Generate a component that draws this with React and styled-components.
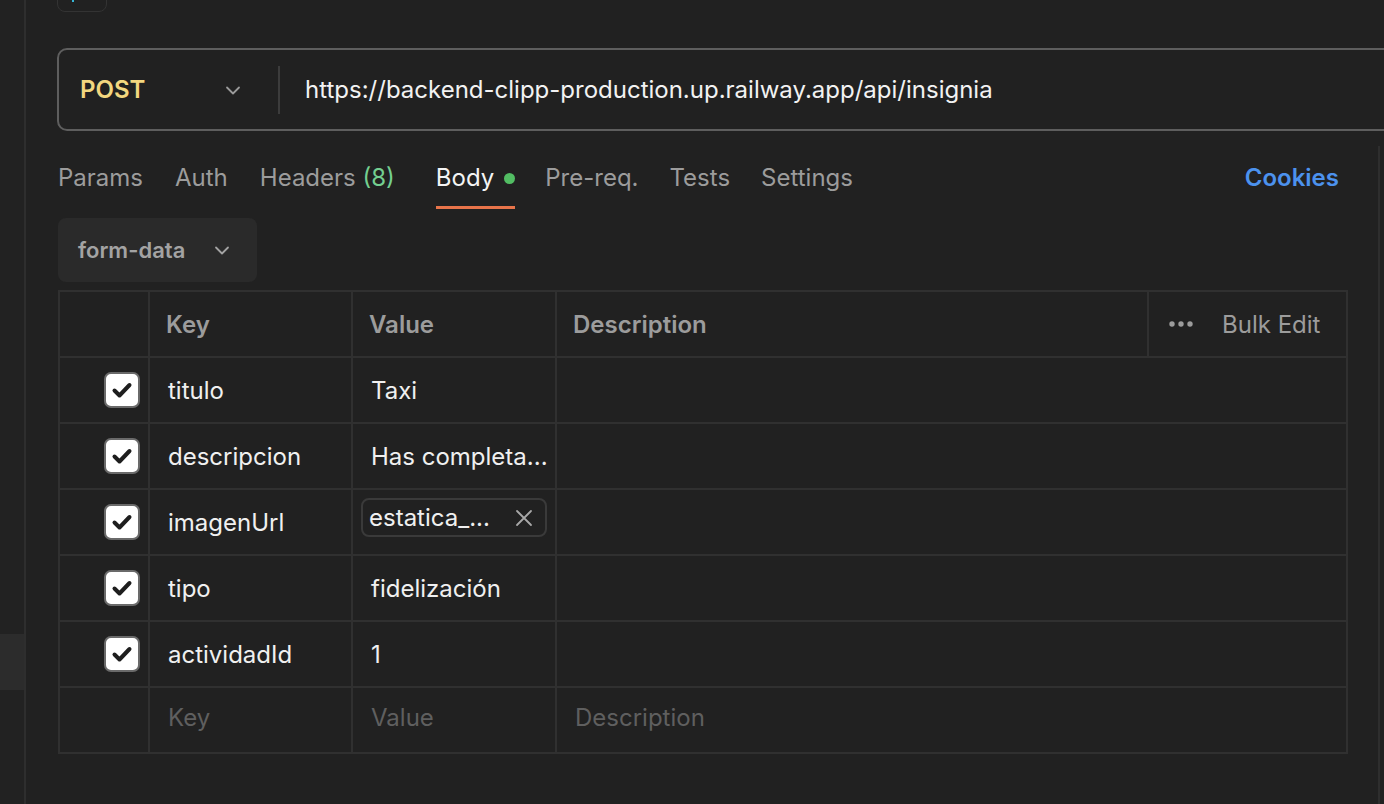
import React from 'react';
import styled, { createGlobalStyle } from 'styled-components';

const GlobalStyle = createGlobalStyle`
  html, body {
    margin: 0;
    padding: 0;
    background: #212121;
    font-family: Inter, "Noto Sans", "Liberation Sans", sans-serif;
    overflow: hidden;
  }
`;

const Page = styled.div`
  display: flex;
  width: 1384px;
  height: 804px;
  background: #212121;
  overflow: hidden;
`;

const Sidebar = styled.div`
  width: 24px;
  flex-shrink: 0;
  background: #222222;
  border-right: 2px solid #2e2e2e;
  display: flex;
  flex-direction: column;
  padding-top: 634px;
`;

const SideActive = styled.div`
  height: 56px;
  background: #2c2c2c;
`;

const Main = styled.div`
  flex: 1;
  display: flex;
  flex-direction: column;
  min-width: 0;
`;

const TopStrip = styled.div`
  height: 12px;
  padding-left: 31px;
  display: flex;
  align-items: flex-end;
  overflow: hidden;
`;

const TopButton = styled.div`
  width: 50px;
  height: 40px;
  flex-shrink: 0;
  border: 1px solid #333333;
  border-radius: 8px;
  box-sizing: border-box;
  position: relative;
  &::after {
    content: '';
    position: absolute;
    left: 14px;
    top: 26px;
    width: 2px;
    height: 3px;
    background: #36b6d6;
  }
`;

const UrlRow = styled.div`
  padding: 36px 0 0 31px;
`;

const UrlBar = styled.div`
  width: 1400px;
  height: 83px;
  box-sizing: border-box;
  border: 2px solid #5e5e5e;
  border-radius: 10px;
  display: flex;
  align-items: center;
`;

const Method = styled.div`
  width: 219px;
  padding: 0 36px 0 21px;
  box-sizing: border-box;
  display: flex;
  align-items: center;
  justify-content: space-between;
  color: #f3d77f;
  font-weight: 600;
  font-size: 24px;
`;

const Divider = styled.div`
  width: 2px;
  height: 48px;
  background: #3c3c3c;
`;

const UrlText = styled.div`
  color: #f2f2f2;
  font-size: 24px;
  padding-left: 25px;
`;

const Lower = styled.div`
  flex: 1;
  margin-top: 15px;
  margin-right: 4px;
  border-right: 2px solid #2e2e2e;
  padding: 0 0 0 32px;
  display: flex;
  flex-direction: column;
`;

const Tabs = styled.div`
  display: flex;
  align-items: flex-start;
  height: 72px;
  padding-right: 39px;
`;

const Tab = styled.div`
  color: ${p => (p.active ? '#f4f4f4' : '#9c9c9c')};
  font-size: 24px;
  height: 63px;
  padding-top: 17px;
  box-sizing: border-box;
  margin-right: ${p => p.gap || 32}px;
  display: flex;
  align-items: flex-start;
  gap: 10px;
  border-bottom: 3px solid ${p => (p.active ? '#e8744a' : 'transparent')};
`;

const Count = styled.span`
  color: #74cf90;
`;

const Dot = styled.span`
  width: 11px;
  height: 11px;
  border-radius: 50%;
  background: #52bd63;
  margin-top: 10px;
`;

const Cookies = styled.div`
  margin-left: auto;
  color: #4c92ee;
  font-weight: 600;
  font-size: 24px;
  padding-top: 17px;
`;

const ModeSelect = styled.div`
  width: 199px;
  height: 64px;
  border-radius: 8px;
  background: #2a2a2a;
  box-sizing: border-box;
  padding: 0 26px 0 20px;
  display: flex;
  align-items: center;
  justify-content: space-between;
  color: #a3a3a3;
  font-size: 22px;
  font-weight: 600;
`;

const Table = styled.div`
  margin-top: 8px;
  width: 1290px;
  display: grid;
  grid-template-columns: 88px 201px 202px 590px 197px;
  grid-auto-rows: 64px;
  gap: 2px;
  padding: 2px;
  box-sizing: border-box;
  background: #303030;
`;

const Cell = styled.div`
  background: #212121;
  display: flex;
  align-items: center;
  padding-left: ${p => p.pad ?? 16}px;
  padding-bottom: ${p => p.lift || 0}px;
  grid-column: span ${p => p.span || 1};
  font-size: 24px;
  color: ${p => (p.placeholder ? '#5f5f5f' : '#f0f0f0')};
  min-width: 0;
  white-space: nowrap;
`;

const HeadCell = styled(Cell)`
  color: #9c9c9c;
  font-weight: 600;
`;

const CheckCell = styled(Cell)`
  justify-content: flex-end;
  padding: 0 8px 0 0;
`;

const BulkCell = styled(Cell)`
  color: #9c9c9c;
  font-weight: 400;
  padding-left: 19px;
  gap: 28px;
`;

const Box = styled.div`
  width: 36px;
  height: 36px;
  box-sizing: border-box;
  background: #ffffff;
  border: 2px solid #6a6a6a;
  border-radius: 7px;
  display: flex;
  align-items: center;
  justify-content: center;
`;

const Chip = styled.div`
  width: 186px;
  height: 39px;
  margin: 0 0 9px -10px;
  box-sizing: border-box;
  border: 2px solid #3a3a3a;
  border-radius: 8px;
  display: flex;
  align-items: center;
  justify-content: space-between;
  padding: 0 12px 0 6px;
  color: #f0f0f0;
  font-size: 24px;
`;

const Chevron = ({ color = '#9a9a9a', size = 18 }) => (
  <svg width={size} height={size} viewBox="0 0 18 18" fill="none">
    <path d="M3 6.5L9 12.5L15 6.5" stroke={color} strokeWidth="1.8" strokeLinecap="round" strokeLinejoin="round" />
  </svg>
);

const Check = () => (
  <svg width="24" height="24" viewBox="0 0 24 24" fill="none">
    <path d="M4.5 12.5L9.5 17.5L19.5 7" stroke="#1e1e1e" strokeWidth="4" strokeLinecap="round" strokeLinejoin="round" />
  </svg>
);

const Dots = () => (
  <svg width="26" height="8" viewBox="0 0 26 8" fill="none">
    <circle cx="4" cy="4" r="2.7" fill="#9c9c9c" />
    <circle cx="13" cy="4" r="2.7" fill="#9c9c9c" />
    <circle cx="22" cy="4" r="2.7" fill="#9c9c9c" />
  </svg>
);

const Close = () => (
  <svg width="18" height="18" viewBox="0 0 18 18" fill="none">
    <path d="M2 2L16 16M16 2L2 16" stroke="#a8a8a8" strokeWidth="1.8" strokeLinecap="round" />
  </svg>
);

const rows = [
  { key: 'titulo', value: 'Taxi' },
  { key: 'descripcion', value: 'Has completa...' },
  { key: 'imagenUrl', file: 'estatica_...' },
  { key: 'tipo', value: 'fidelización' },
  { key: 'actividadId', value: '1' },
];

export default function App() {
  return (
    <Page>
      <GlobalStyle />
      <Sidebar>
        <SideActive />
      </Sidebar>
      <Main>
        <TopStrip>
          <TopButton />
        </TopStrip>
        <UrlRow>
          <UrlBar>
            <Method>
              POST
              <Chevron />
            </Method>
            <Divider />
            <UrlText>https://backend-clipp-production.up.railway.app/api/insignia</UrlText>
          </UrlBar>
        </UrlRow>
        <Lower>
          <Tabs>
            <Tab>Params</Tab>
            <Tab>Auth</Tab>
            <Tab gap={41}>
              <span>
                Headers <Count>(8)</Count>
              </span>
            </Tab>
            <Tab active gap={30}>
              Body
              <Dot />
            </Tab>
            <Tab gap={31}>Pre-req.</Tab>
            <Tab gap={31}>Tests</Tab>
            <Tab>Settings</Tab>
            <Cookies>Cookies</Cookies>
          </Tabs>
          <ModeSelect>
            form-data
            <Chevron color="#a3a3a3" />
          </ModeSelect>
          <Table>
            <HeadCell />
            <HeadCell>Key</HeadCell>
            <HeadCell>Value</HeadCell>
            <HeadCell>Description</HeadCell>
            <BulkCell>
              <Dots />
              Bulk Edit
            </BulkCell>
            {rows.map(r => (
              <React.Fragment key={r.key}>
                <CheckCell>
                  <Box>
                    <Check />
                  </Box>
                </CheckCell>
                <Cell pad={18}>{r.key}</Cell>
                <Cell pad={18}>
                  {r.file ? (
                    <Chip>
                      {r.file}
                      <Close />
                    </Chip>
                  ) : (
                    r.value
                  )}
                </Cell>
                <Cell span={2} />
              </React.Fragment>
            ))}
            <Cell />
            <Cell pad={18} lift={6} placeholder>Key</Cell>
            <Cell pad={18} lift={6} placeholder>Value</Cell>
            <Cell pad={18} lift={6} span={2} placeholder>Description</Cell>
          </Table>
        </Lower>
      </Main>
    </Page>
  );
}
